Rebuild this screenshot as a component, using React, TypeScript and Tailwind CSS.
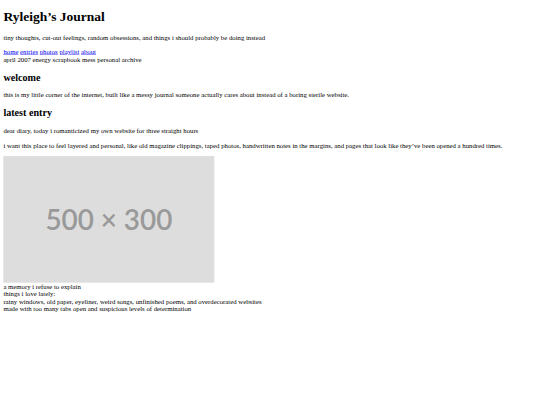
const navLinks = ['home', 'entries', 'photos', 'playlist', 'about'];

// the page is a plain, unstyled html document at 1280px, shrunk to fit the 540px window
export default function App() {
  return (
    <div className="w-[540px] h-[405px] overflow-hidden bg-white">
      <div className="flow-root w-[1280px] origin-top-left scale-[0.421875] px-[8px] font-['Liberation_Serif',serif] text-[16px] leading-[normal] text-black">
        <h1 className="mt-[21.44px] mb-[21.44px] text-[32px] font-bold">Ryleigh’s Journal</h1>
        <p className="my-[16px]">
          tiny thoughts, cut-out feelings, random obsessions, and things i should probably be doing instead
        </p>

        <nav>
          {navLinks.map((link, i) => (
            <span key={link}>
              <a href="#" className="text-[#0000ee] underline">
                {link}
              </a>
              {i < navLinks.length - 1 && ' '}
            </span>
          ))}
        </nav>
        <div>april 2007 energy scrapbook mess personal archive</div>

        <h2 className="mt-[19.92px] mb-[19.92px] text-[24px] font-bold">welcome</h2>
        <p className="my-[16px]">
          this is my little corner of the internet, built like a messy journal someone actually cares about instead
          of a boring sterile website.
        </p>

        <h2 className="mt-[19.92px] mb-[19.92px] text-[24px] font-bold">latest entry</h2>
        <p className="my-[16px]">dear diary, today i romanticized my own website for three straight hours</p>
        <p className="my-[16px]">
          i want this place to feel layered and personal, like old magazine clippings, taped photos, handwritten
          notes in the margins, and pages that look like they’ve been opened a hundred times.
        </p>

        {/* placeholder image */}
        <div className="flex h-[300px] w-[500px] items-center justify-center bg-[#dddddd] font-['Lato',sans-serif] text-[66px] font-semibold text-[#999999]">
          500 × 300
        </div>
        <div>a memory i refuse to explain</div>

        <div>things i love lately:</div>
        <div>rainy windows, old paper, eyeliner, weird songs, unfinished poems, and overdecorated websites</div>
        <div>made with too many tabs open and suspicious levels of determination</div>
      </div>
    </div>
  );
}
